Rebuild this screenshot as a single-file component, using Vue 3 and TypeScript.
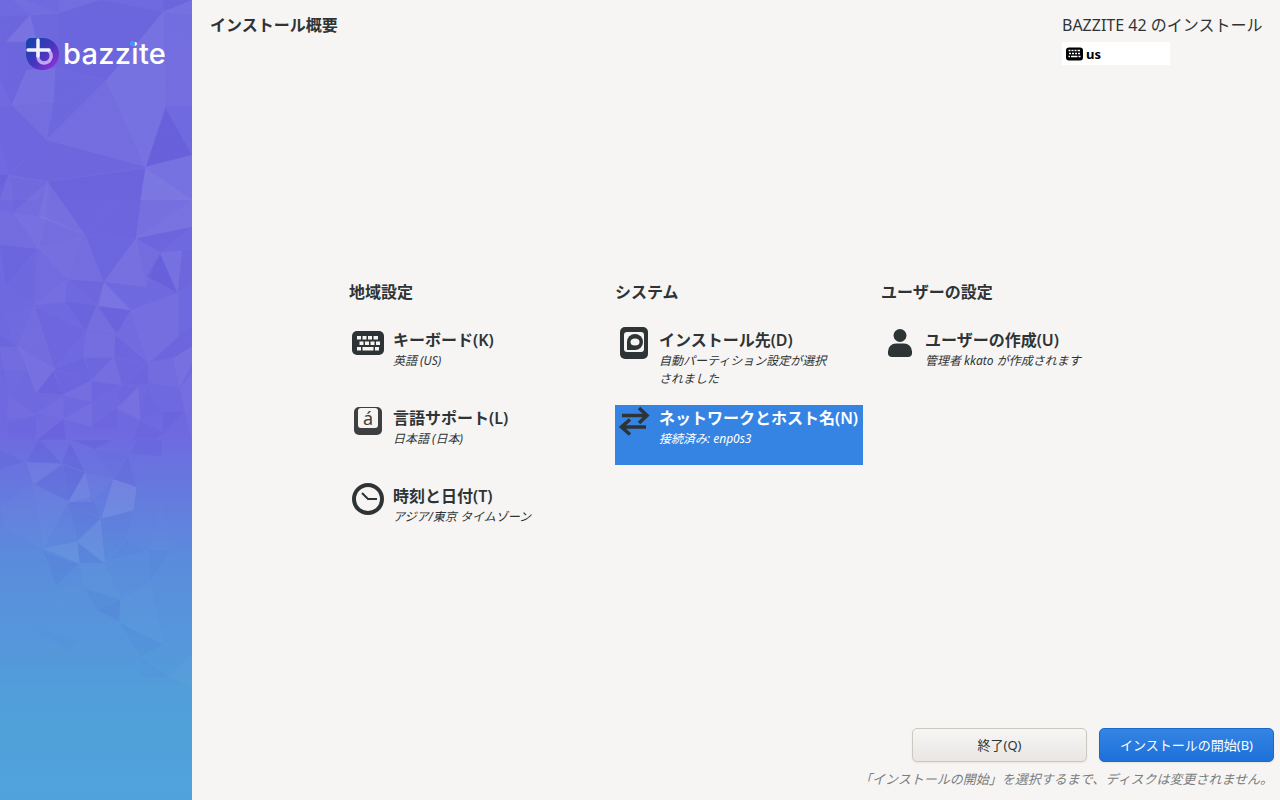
<script setup lang="ts">
interface Poly { p: string; c: string; o: number }
const L = '#ffffff'
const D = '#3f2fc4'
const mk = (p: string, c: string, o: number): Poly => ({ p, c, o: +(o * 0.62).toFixed(3) })
const top: Poly[] = [
  mk('0,50 90,45 15,125 0,130', D, .10),
  mk('90,45 20,125 110,125', L, .10),
  mk('90,45 175,40 165,205 110,125', D, .06),
  mk('75,0 175,40 95,45 40,0', L, .05),
  mk('180,0 300,0 175,40', L, .05),
  mk('175,40 300,0 490,35 320,240 165,205', D, .10),
  mk('490,35 575,45 576,320 495,320', L, .05),
  mk('320,240 490,35 495,320', L, .09),
  mk('165,205 320,240 160,305', D, .03),
  mk('80,210 165,205 160,305 35,315', L, .08),
  mk('0,125 110,125 165,205 80,210 35,315 0,235', D, .10),
  mk('35,315 160,305 140,420', L, .05),
  mk('160,305 320,240 140,420', D, .06),
  mk('320,240 495,320 437,500', L, .09),
  mk('320,240 437,500 140,420', L, .05),
  mk('497,325 576,465 437,500', D, .22),
  mk('35,315 140,420 25,525 0,420 0,320', D, .05),
  mk('140,420 437,500 145,545 25,525', D, .07),
  mk('437,500 576,465 576,600 420,600', L, .09),
  mk('437,505 420,600 150,600 145,545', D, .06),
  mk('0,520 25,525 0,600', D, .08),
  mk('25,525 145,545 110,600 0,600', L, .04),
  mk('490,35 576,0 576,45', L, .08),
  mk('490,0 576,0 490,35', D, .08),
]
const mid: Poly[] = [
  mk('143,305 437,265 255,465', D, .10),
  mk('437,265 408,475 255,465', D, .10),
  mk('437,265 576,360 408,475', L, .07),
  mk('576,360 576,440 408,475', L, .10),
  mk('143,305 255,465 115,410', L, .07),
  mk('30,290 143,305 42,395', D, .05),
  mk('42,395 143,310 138,412', L, .04),
  mk('0,285 25,285 0,320', D, .16),
  mk('0,390 42,398 115,505 0,495', L, .04),
  mk('42,398 138,412 115,505', L, .08),
  mk('138,412 255,465 115,505', L, .05),
  mk('255,465 310,605 200,597', L, .05),
  mk('115,505 250,468 200,597', L, .07),
  mk('255,465 408,475 312,605', D, .09),
  mk('408,475 437,620 312,605', L, .08),
  mk('408,475 480,518 437,620', L, .04),
  mk('480,520 530,637 440,590', D, .22),
  mk('480,518 546,512 533,637', L, .09),
  mk('546,512 576,510 576,610 533,637', D, .07),
  mk('408,475 576,440 480,518', D, .08),
  mk('0,495 112,507 18,620', D, .11),
  mk('112,507 195,598 103,675', L, .03),
  mk('18,620 112,507 103,675', D, .02),
  mk('200,598 310,605 290,672', D, .07),
  mk('200,598 103,675 195,665', L, .06),
  mk('195,665 290,675 258,752', D, .13),
  mk('312,607 392,690 295,678', L, .12),
  mk('295,678 392,690 350,762', D, .15),
  mk('290,678 350,762 258,752', L, .05),
  mk('395,690 536,638 536,768 445,848', L, .06),
  mk('395,690 445,848 350,765', L, .03),
  mk('105,680 258,752 163,868', D, .05),
  mk('103,680 163,868 55,800', L, .04),
  mk('15,712 103,680 55,800', L, .02),
  mk('0,765 50,800 0,800', D, .12),
  mk('258,755 345,765 340,832 250,832', L, .06),
  mk('345,765 445,848 345,832', D, .08),
  mk('536,768 576,740 576,800 520,830 455,845', D, .08),
  mk('520,835 576,800 576,850 540,920', L, .08),
  mk('445,848 520,835 540,925 445,905', L, .04),
  mk('345,835 445,848 365,915', D, .04),
  mk('365,915 445,850 445,915', D, .08),
  mk('250,832 275,900 165,868', D, .12),
  mk('255,835 340,832 275,900', D, .06),
  mk('340,832 365,915 275,900', L, .06),
  mk('163,870 275,900 187,945', D, .10),
  mk('55,800 163,868 108,938', L, .08),
  mk('0,800 55,800 75,870 25,950', L, .04),
  mk('0,870 75,870 25,950', D, .06),
  mk('160,873 187,945 110,938', D, .16),
  mk('187,945 275,902 275,965', L, .06),
  mk('275,905 362,915 275,965', D, .07),
  mk('415,920 365,980 350,945 365,917', D, .05),
  mk('350,985 415,920 420,1020', L, .08),
  mk('440,918 485,995 420,1020', D, .06),
  mk('490,995 555,993 490,1058', D, .13),
  mk('540,925 576,880 576,1080 555,993', L, .05),
  mk('110,1000 190,950 190,1015', L, .05),
  mk('110,1010 190,1015 110,1078', L, .03),
  mk('190,1018 275,968 275,1040', L, .06),
  mk('275,1040 350,985 350,1050', D, .10),
  mk('190,1018 200,1080 110,1080', D, .14),
  mk('400,1080 420,1020 490,1058 470,1080', D, .08),
  mk('25,950 110,1005 22,1020', L, .04),
  mk('25,1025 110,1010 105,1080 25,1080', D, .06),
]
const low: Poly[] = [
  mk('0,30 75,65 0,90', D, .10),
  mk('80,65 115,0 185,70', D, .14),
  mk('130,0 210,0 280,25 185,70', L, .02),
  mk('185,70 210,10 255,95', D, .18),
  mk('80,68 185,72 100,132', L, .08),
  mk('105,132 190,75 205,182', D, .12),
  mk('190,75 255,98 205,185', D, .16),
  mk('215,0 335,0 285,28', D, .16),
  mk('390,42 485,50 485,0 410,0', D, .12),
  mk('280,30 385,42 340,118', D, .03),
  mk('340,118 385,45 410,142', D, .12),
  mk('340,118 410,142 400,210 305,235', L, .14),
  mk('255,98 340,118 275,185', L, .04),
  mk('255,98 275,185 205,185', L, .12),
  mk('205,190 275,168 300,232', D, .10),
  mk('205,190 300,235 232,300', D, .07),
  mk('100,135 205,185 130,325', L, .05),
  mk('0,200 100,135 125,325 15,265', L, .03),
  mk('232,305 302,238 315,368', L, .10),
  mk('130,325 232,305 237,370', L, .10),
  mk('130,335 237,372 168,438', D, .08),
  mk('232,308 310,368 240,370', D, .08),
  mk('300,235 400,215 378,300 312,365', D, .03),
  mk('378,302 445,330 320,365', D, .04),
  mk('485,190 512,330 445,330', L, .02),
  mk('445,330 510,330 450,425', D, .04),
  mk('240,370 310,370 250,440', L, .03),
  mk('310,372 362,475 250,440', L, .04),
  mk('250,445 358,478 290,510', D, .05),
  mk('290,510 362,478 358,545', D, .10),
  mk('168,445 250,442 170,505', L, .02),
  mk('362,478 450,430 490,610 360,545', L, .03),
  mk('100,560 225,600 210,640', D, .03),
  mk('360,550 490,615 420,650', D, .05),
  mk('420,650 510,710 420,715', D, .04),
  mk('510,710 576,640 576,740', L, .04),
]
const groups = [
  { t: 'scale(.3333)', ps: top },
  { t: 'translate(0,80) scale(.3333)', ps: mid },
  { t: 'translate(0,440) scale(.3333)', ps: low },
]
</script>

<template>
  <div class="root">
    <aside class="side">
      <svg class="art" viewBox="0 0 192 800" width="192" height="800">
        <g v-for="g in groups" :key="g.t" :transform="g.t">
          <polygon v-for="x in g.ps" :key="x.p" :points="x.p" :fill="x.c" :fill-opacity="x.o" stroke="#ffffff" stroke-opacity=".04" stroke-width="1.5" />
        </g>
      </svg>
      <div class="logo">
        <svg width="34" height="34" viewBox="0 0 34 34">
          <defs>
            <linearGradient id="lg" x1="0" y1="0" x2="1" y2="1">
              <stop offset="0" stop-color="#0b46a8" />
              <stop offset=".55" stop-color="#4b35c0" />
              <stop offset="1" stop-color="#a42fe0" />
            </linearGradient>
          </defs>
          <path d="M6 1h12a16 16 0 0 1 0 32h-2A16 16 0 0 1 1 17V6a5 5 0 0 1 5-5z" fill="url(#lg)" />
          <path d="M13 14v6a6 6 0 0 0 6 6a7 7 0 0 0 5-12" fill="none" stroke="#d9c6f5" stroke-opacity=".8" stroke-width="3.400" stroke-linecap="round" />
          <path d="M13 3v16M3 13h21" stroke="#f2f2fb" stroke-width="3.400" stroke-linecap="round" />
        </svg>
        <span class="word">bazzite<i class="dot"></i></span>
      </div>
    </aside>
    <main class="main">
      <header class="head">
        <h1 class="title">インストール概要</h1>
        <div class="head-r">
          <div class="product">BAZZITE 42 のインストール</div>
          <div class="kbd">
            <svg width="17" height="14" viewBox="0 0 17 14"><rect y="0.500" width="17" height="13" rx="3" fill="#000" /><path d="M2.500 3.500h2M5.500 3.500h2M8.500 3.500h2M11.500 3.500h2.500M3 6.500h2M6 6.500h2M9 6.500h2M12 6.500h2M2.500 9.500h1.500M5 9.500h6.500M12.500 9.500h2" stroke="#fff" stroke-width="1.600" /></svg>
            <b>us</b>
          </div>
        </div>
      </header>
      <section class="hub">
        <div class="col">
          <h2 class="cat">地域設定</h2>
          <div class="item">
            <svg class="ic" width="32" height="32" viewBox="0 0 32 32"><rect y="4" width="32" height="24" rx="5" fill="#2e3436" /><path d="M5 9h4v3.500H5zM10.500 9h4v3.500h-4zM16 9h4v3.500h-4zM21.500 9h4.500v3.500h-4.500zM7.500 14.500h4V18h-4zM13 14.500h4V18h-4zM18.500 14.500h4V18h-4zM24 14.500h4V18h-4zM5 20h4v3.500H5zM10.500 20h11v3.500h-11zM23 20h4v3.500h-4z" fill="#f6f5f4" /></svg>
            <div class="tx"><div class="nm">キーボード(K)</div><div class="st">英語 (US)</div></div>
          </div>
          <div class="item">
            <svg class="ic" width="32" height="32" viewBox="0 0 32 32"><rect x="2" y="2" width="28" height="28" rx="5" fill="#3d3f40" /><rect x="6" y="3" width="20" height="20" rx="3" fill="#f6f5f4" /><text x="16" y="20" text-anchor="middle" class="acc">á</text></svg>
            <div class="tx"><div class="nm">言語サポート(L)</div><div class="st">日本語 (日本)</div></div>
          </div>
          <div class="item">
            <svg class="ic" width="32" height="32" viewBox="0 0 32 32"><circle cx="16" cy="16" r="14" fill="none" stroke="#2e3436" stroke-width="4" /><path d="M10 10l6 6h9" fill="none" stroke="#2e3436" stroke-width="2" /></svg>
            <div class="tx"><div class="nm">時刻と日付(T)</div><div class="st">アジア/東京 タイムゾーン</div></div>
          </div>
        </div>
        <div class="col">
          <h2 class="cat">システム</h2>
          <div class="item">
            <svg class="ic" width="32" height="32" viewBox="0 0 32 32"><rect x="2" y="0" width="28" height="32" rx="5" fill="#2e3436" /><rect x="6" y="5" width="20" height="20" rx="3" fill="#f6f5f4" /><path d="M17 7a8 8 0 0 1 0 16h-8v-8a8 8 0 0 1 8-8z" fill="#2e3436" /><ellipse cx="17" cy="15" rx="4.500" ry="3.500" fill="#f6f5f4" /></svg>
            <div class="tx"><div class="nm">インストール先(D)</div><div class="st narrow">自動パーティション設定が選択されました</div></div>
          </div>
          <div class="item sel">
            <svg class="ic arrows" width="32" height="32" viewBox="0 0 32 32"><path d="M4 10.500h24M21 3l8 7.500-8 7.500M28 22H4M12 14.500L3.500 22l8.500 7.500" fill="none" stroke="#2e3436" stroke-width="3.600" /></svg>
            <div class="tx"><div class="nm">ネットワークとホスト名(N)</div><div class="st">接続済み: enp0s3</div></div>
          </div>
        </div>
        <div class="col">
          <h2 class="cat">ユーザーの設定</h2>
          <div class="item">
            <svg class="ic" width="32" height="32" viewBox="0 0 32 32"><circle cx="16" cy="8.500" r="6.500" fill="#2e3436" /><path d="M12 16.500h8a8 8 0 0 1 8 8V27a4 4 0 0 1-4 3H8a4 4 0 0 1-4-3v-2.500a8 8 0 0 1 8-8z" fill="#2e3436" /></svg>
            <div class="tx"><div class="nm">ユーザーの作成(U)</div><div class="st">管理者 kkato が作成されます</div></div>
          </div>
        </div>
      </section>
      <footer class="foot">
        <div class="btns">
          <button class="btn">終了(Q)</button>
          <button class="btn pri">インストールの開始(B)</button>
        </div>
        <p class="warn">「インストールの開始」を選択するまで、ディスクは変更されません。</p>
      </footer>
    </main>
  </div>
</template>

<style>
html, body { margin: 0; background: #f6f5f4; }
</style>

<style scoped>
.root {
  display: flex;
  width: 1280px;
  height: 800px;
  overflow: hidden;
  background: #f6f5f4;
  color: #2e3436;
  font-family: "Noto Sans", "Noto Sans CJK JP", sans-serif;
}
.side {
  position: relative;
  width: 192px;
  flex: none;
  background: linear-gradient(180deg, #6f6adf 0%, #6f69e0 54%, #5a8cdc 70%, #519fda 88%, #4fa3dc 100%);
}
.art { position: absolute; inset: 0; }
.logo {
  position: relative;
  display: flex;
  align-items: center;
  gap: 4px;
  padding: 37px 0 0 25px;
}
.word {
  position: relative;
  color: #fff;
  font-family: "Inter", sans-serif;
  font-size: 29px;
  font-weight: 500;
  line-height: 34px;
  letter-spacing: .3px;
}
.dot {
  position: absolute;
  left: 67px;
  top: 4px;
  width: 5px;
  height: 5px;
  border-radius: 50%;
  background: #3f9bf2;
}
.main { flex: 1; display: flex; flex-direction: column; min-width: 0; }
.head {
  display: flex;
  justify-content: space-between;
  padding: 14px 18px 0;
  height: 261px;
  box-sizing: border-box;
}
.title { margin: 0; font-size: 16px; font-weight: 700; line-height: 23px; }
.head-r { width: 200px; }
.product { font-size: 16px; line-height: 23px; white-space: nowrap; }
.kbd {
  display: flex;
  align-items: center;
  gap: 3px;
  width: 108px;
  height: 23px;
  margin-top: 5px;
  padding-left: 4px;
  box-sizing: border-box;
  background: #fff;
  color: #000;
  font-size: 13px;
}
.hub { display: flex; padding-left: 157px; }
.col { width: 266px; }
.cat { margin: 20px 0 24px; font-size: 16px; font-weight: 700; line-height: 22px; }
.item {
  display: flex;
  gap: 9px;
  width: 248px;
  height: 60px;
  margin-bottom: 18px;
  box-sizing: border-box;
  padding: 0 0 0 3px;
}
.ic { flex: none; }
.arrows { overflow: visible; }
.acc { font: 18px "Noto Sans", sans-serif; fill: #3d3f40; }
.tx { padding-top: 1px; }
.nm { font-size: 16px; font-weight: 600; line-height: 24px; white-space: nowrap; }
.st { font-size: 12px; font-style: italic; line-height: 18px; white-space: nowrap; }
.st.narrow { white-space: normal; width: 170px; }
.sel { background: #3584e4; }
.sel .nm, .sel .st { color: #fff; }
.foot { margin-top: auto; padding: 0 6px 11px 0; display: flex; flex-direction: column; align-items: flex-end; }
.btns { display: flex; gap: 12px; }
.btn {
  width: 175px;
  height: 34px;
  border: 1px solid #cdc7c2;
  border-radius: 5px;
  background: linear-gradient(180deg, #f7f6f5, #e9e6e3);
  box-shadow: 0 1px 2px rgba(0,0,0,.07);
  color: #2e3436;
  font: 13px "Noto Sans", "Noto Sans CJK JP", sans-serif;
  padding: 0 0 2px;
}
.pri {
  background: linear-gradient(180deg, #3584e4, #1c71d8);
  border-color: #1b6acb;
  color: #fff;
}
.warn {
  margin: 7px 1px 0 0;
  color: #7b7d7e;
  font-size: 13px;
  font-style: italic;
  line-height: 20px;
  white-space: nowrap;
}
</style>
